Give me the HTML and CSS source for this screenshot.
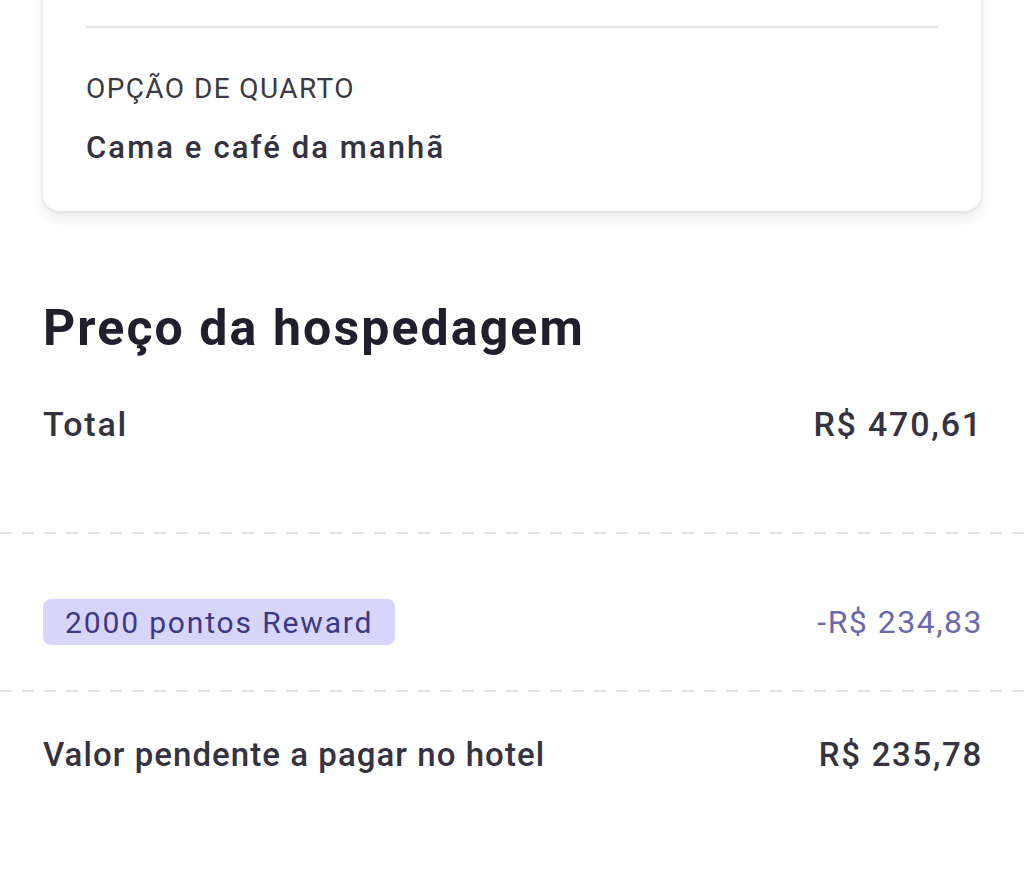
FILE: index.html
```html
<!DOCTYPE html>
<html lang="pt-BR">
<head>
<meta charset="utf-8">
<title>Preço da hospedagem</title>
<link rel="stylesheet" href="styles.css">
</head>
<body>
  <div class="page">
    <section class="card">
      <div class="divider"></div>
      <div class="card-label">OPÇÃO DE QUARTO</div>
      <div class="card-value">Cama e café da manhã</div>
    </section>

    <h1 class="title">Preço da hospedagem</h1>

    <div class="row row-total">
      <span>Total</span>
      <span class="amount">R$ 470,61</span>
    </div>

    <div class="dashed"></div>

    <div class="row row-reward">
      <span class="badge">2000 pontos Reward</span>
      <span class="discount">-R$ 234,83</span>
    </div>

    <div class="dashed"></div>

    <div class="row row-pending">
      <span>Valor pendente a pagar no hotel</span>
      <span class="amount">R$ 235,78</span>
    </div>
  </div>
</body>
</html>
```

FILE: styles.css
```css
* { box-sizing: border-box; }
html, body {
  margin: 0;
  padding: 0;
  background: #ffffff;
  font-family: Roboto, "Noto Sans", sans-serif;
  color: #2f2e3b;
}
.page {
  width: 1024px;
  height: 872px;
  overflow: hidden;
  display: flex;
  flex-direction: column;
}
.card {
  margin: -30px 43px 0 43px;
  padding: 56px 43px 44px 43px;
  background: #fff;
  border-radius: 16px;
  box-shadow: 0 6px 14px rgba(0, 0, 0, 0.10), 0 1px 3px rgba(0, 0, 0, 0.08);
  display: flex;
  flex-direction: column;
}
.divider {
  height: 2px;
  background: #e6e6e8;
  margin-bottom: 44px;
}
.card-label {
  font-size: 28px;
  line-height: 34px;
  font-weight: 400;
  color: #3a3944;
  letter-spacing: 1.4px;
  margin-bottom: 23px;
}
.card-value {
  font-size: 31px;
  line-height: 38px;
  font-weight: 500;
  color: #33323e;
  letter-spacing: 2.1px;
}
.title {
  margin: 88px 43px 0 43px;
  font-size: 50px;
  line-height: 58px;
  font-weight: 700;
  color: #201f2e;
  letter-spacing: 2.1px;
}
.row {
  display: flex;
  justify-content: space-between;
  align-items: center;
  padding: 0 43px;
  font-weight: 500;
  color: #34333f;
}
.row-total {
  margin-top: 46px;
  margin-bottom: 87px;
  font-size: 34px;
  line-height: 42px;
  letter-spacing: 1.8px;
}
.amount {
  margin-right: -2px;
}
.dashed {
  height: 2px;
  background-image: linear-gradient(to right, #e2e2e4 0 12px, transparent 12px 22px);
  background-size: 22px 2px;
  background-repeat: repeat-x;
}
.row-reward {
  margin-top: 65px;
  margin-bottom: 45px;
  font-weight: 400;
}
.badge {
  display: inline-flex;
  align-items: center;
  height: 46px;
  padding: 0 22px;
  background: #d8d5fb;
  color: #3b3985;
  border-radius: 8px;
  font-size: 30px;
  letter-spacing: 1.85px;
}
.discount {
  color: #6b68ad;
  font-size: 32px;
  letter-spacing: 1.5px;
  margin-right: -2px;
}
.row-pending {
  margin-top: 43px;
  font-size: 33px;
  line-height: 40px;
  letter-spacing: 1.05px;
}
.row-pending .amount {
  letter-spacing: 1.7px;
}
```
